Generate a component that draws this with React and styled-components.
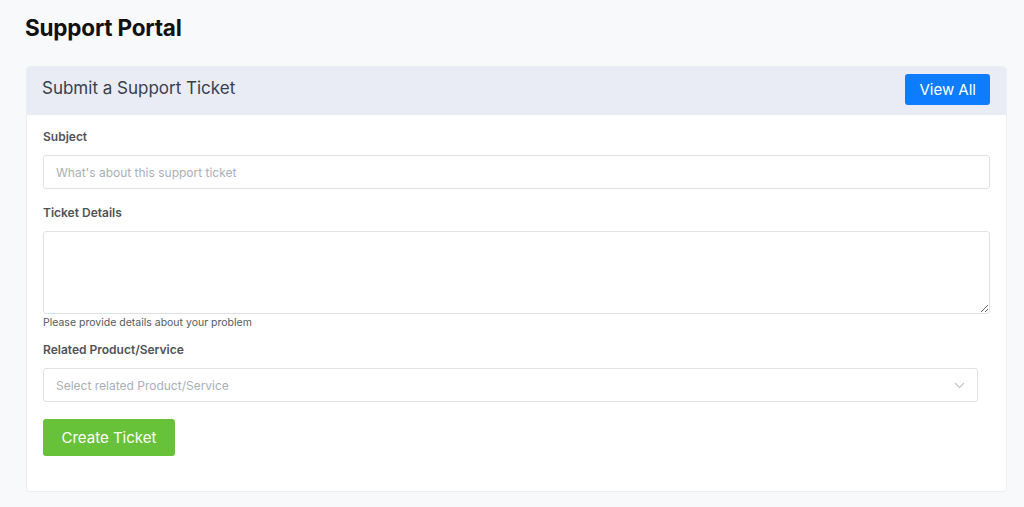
import React from "react";
import styled, { createGlobalStyle } from "styled-components";

const GlobalStyle = createGlobalStyle`
  html, body {
    margin: 0;
    padding: 0;
    background: #f8f9fb;
    font-family: Inter, "Liberation Sans", sans-serif;
  }
  * { box-sizing: border-box; }
`;

const Page = styled.div`
  padding: 14px 17px 16px 26px;
  width: 1024px;
  height: 507px;
`;

const PageTitle = styled.h1`
  margin: 0 0 25px -1px;
  font-size: 22.5px;
  font-weight: 700;
  color: #111;
  line-height: 27px;
  letter-spacing: -0.2px;
`;

const Card = styled.div`
  background: #fff;
  border: 1px solid #eceef2;
  border-radius: 4px;
  overflow: hidden;
`;

const CardHeader = styled.div`
  display: flex;
  align-items: center;
  justify-content: space-between;
  height: 48px;
  padding: 0 16px 0 15px;
  background: #e9ecf4;
`;

const CardTitle = styled.h2`
  margin: 0 0 6px;
  font-size: 17px;
  font-weight: 400;
  color: #37404f;
`;

const Button = styled.button`
  border: none;
  border-radius: 3px;
  color: #fff;
  font-family: inherit;
  cursor: pointer;
  background: ${(p) => (p.$variant === "success" ? "#67c23a" : "#0d7cff")};
  height: ${(p) => (p.$variant === "success" ? "37px" : "31px")};
  padding: ${(p) => (p.$variant === "success" ? "0 18.5px" : "0 14px")};
  margin-bottom: ${(p) => (p.$variant === "success" ? "0" : "3px")};
  font-size: 15px;
`;

const CardBody = styled.div`
  padding: 14px 16px 35px 16px;
  display: flex;
  flex-direction: column;
`;

const Field = styled.div`
  display: flex;
  flex-direction: column;
  margin-bottom: ${(p) => p.$mb || "16px"};
  width: ${(p) => p.$width || "100%"};
`;

const Label = styled.label`
  font-size: 12px;
  font-weight: 600;
  color: #4f5258;
  margin-bottom: 10px;
  line-height: 16px;
`;

const inputBase = `
  width: 100%;
  border: 1px solid #dfe1e5;
  border-radius: 3px;
  font-family: inherit;
  font-size: 12px;
  color: #333;
  background: #fff;
  outline: none;
  &::placeholder { color: #a9afb8; }
`;

const Input = styled.input`
  ${inputBase}
  height: 34px;
  padding: 0 12px;
`;

const TextArea = styled.textarea`
  ${inputBase}
  height: 83px;
  padding: 8px 12px;
  resize: vertical;
  display: block;
`;

const Help = styled.small`
  font-size: 10.5px;
  color: #555a60;
  margin-top: 2px;
  line-height: 14px;
`;

const SelectBox = styled.div`
  ${inputBase}
  height: 34px;
  padding: 0 12px;
  display: flex;
  align-items: center;
  justify-content: space-between;
  color: #a9afb8;
`;

const Chevron = () => (
  <svg width="11" height="7" viewBox="0 0 11 7" fill="none">
    <path d="M1 1l4.5 4.5L10 1" stroke="#c5c9cf" strokeWidth="1.2" />
  </svg>
);

export default function App() {
  return (
    <>
      <GlobalStyle />
      <Page>
        <PageTitle>Support Portal</PageTitle>
        <Card>
          <CardHeader>
            <CardTitle>Submit a Support Ticket</CardTitle>
            <Button>View All</Button>
          </CardHeader>
          <CardBody>
            <Field>
              <Label>Subject</Label>
              <Input placeholder="What's about this support ticket" />
            </Field>
            <Field $mb="12px">
              <Label>Ticket Details</Label>
              <TextArea />
              <Help>Please provide details about your problem</Help>
            </Field>
            <Field $width="935px" $mb="17px">
              <Label>Related Product/Service</Label>
              <SelectBox>
                Select related Product/Service
                <Chevron />
              </SelectBox>
            </Field>
            <div>
              <Button $variant="success">Create Ticket</Button>
            </div>
          </CardBody>
        </Card>
      </Page>
    </>
  );
}
